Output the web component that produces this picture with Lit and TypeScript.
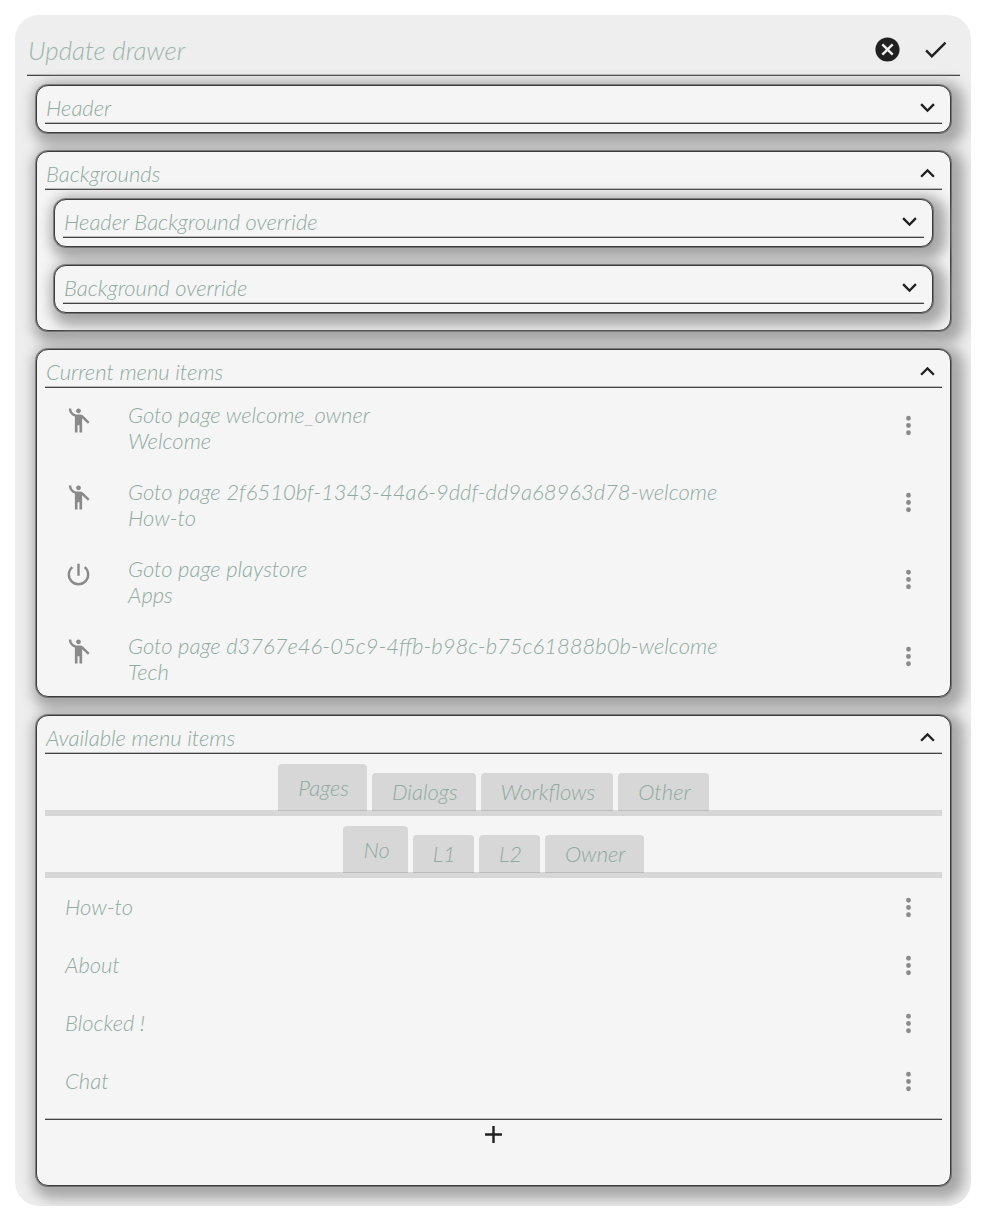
import { LitElement, html, css, svg } from "lit";
import { customElement, property, state } from "lit/decorators.js";

const ICONS: Record<string, string> = {
  down: "M7.41,8.58L12,13.17L16.59,8.58L18,10L12,16L6,10L7.41,8.58Z",
  up: "M7.41,15.41L12,10.83L16.59,15.41L18,14L12,8L6,14L7.41,15.41Z",
  check: "M21,7L9,19L3.5,13.5L4.91,12.09L9,16.17L19.59,5.59L21,7Z",
  close:
    "M12,2C17.53,2 22,6.47 22,12C22,17.53 17.53,22 12,22C6.47,22 2,17.53 2,12C2,6.47 6.47,2 12,2M15.59,7L12,10.59L8.41,7L7,8.41L10.59,12L7,15.59L8.41,17L12,13.41L15.59,17L17,15.59L13.41,12L17,8.41L15.59,7Z",
  dots: "M12,16A2,2 0 0,1 14,18A2,2 0 0,1 12,20A2,2 0 0,1 10,18A2,2 0 0,1 12,16M12,10A2,2 0 0,1 14,12A2,2 0 0,1 12,14A2,2 0 0,1 10,12A2,2 0 0,1 12,10M12,4A2,2 0 0,1 14,6A2,2 0 0,1 12,8A2,2 0 0,1 10,6A2,2 0 0,1 12,4Z",
  plus: "M19,13H13V19H11V13H5V11H11V5H13V11H19V13Z",
  power:
    "M13,3H11V13H13V3M17.83,5.17L16.41,6.59C17.99,7.86 19,9.81 19,12A7,7 0 0,1 12,19A7,7 0 0,1 5,12C5,9.81 6.01,7.86 7.58,6.58L6.17,5.17C4.23,6.82 3,9.26 3,12A9,9 0 0,0 12,21A9,9 0 0,0 21,12C21,9.26 19.77,6.82 17.83,5.17Z",
  person:
    "M12,2C13.1,2 14,2.9 14,4C14,5.1 13.1,6 12,6C10.9,6 10,5.1 10,4C10,2.9 10.9,2 12,2M15.9,8.1C15.5,7.7 14.8,7 13.5,7H11C8.2,7 6,4.8 6,2H4C4,5.2 6.1,7.8 9,8.7V22H11.2V16H12.8V22H15V10.1L19.8,14.6L21.2,13.2L15.9,8.1Z",
};

@customElement("ui-icon")
class UiIcon extends LitElement {
  @property() name = "";
  static styles = css`
    :host {
      display: inline-flex;
    }
    svg {
      width: 29px;
      height: 29px;
      fill: currentColor;
    }
  `;
  render() {
    return html`<svg viewBox="0 0 24 24" aria-hidden="true">${svg`<path d=${ICONS[this.name] ?? ""}></path>`}</svg>`;
  }
}

@customElement("fold-card")
class FoldCard extends LitElement {
  @property() heading = "";
  @property({ type: Boolean, reflect: true }) open = false;
  static styles = css`
    :host {
      display: block;
      box-sizing: border-box;
      margin: 0 9px;
      padding: 0 8px 8px;
      border: 1px solid #3c3c3c;
      border-radius: 12px;
      background: #f5f5f5;
      box-shadow: 0 0 0 1px rgba(60, 60, 60, 0.5), 5px 5px 13px 8px #a7a7a7;
    }
    .head {
      display: flex;
      align-items: center;
      justify-content: space-between;
      box-sizing: border-box;
      width: 100%;
      height: 38px;
      margin: 0;
      padding: 6px 0 0 1px;
      border: 0;
      border-bottom: 1px solid #444;
      box-shadow: inset 0 -1px 0 #bbb;
      background: none;
      color: inherit;
      font: inherit;
      text-align: left;
      cursor: pointer;
    }
    ui-icon {
      color: #212121;
    }
  `;
  render() {
    return html`
      <button class="head" aria-expanded=${this.open ? "true" : "false"} @click=${() => (this.open = !this.open)}>
        <span>${this.heading}</span>
        <ui-icon name=${this.open ? "up" : "down"}></ui-icon>
      </button>
      ${this.open ? html`<slot></slot>` : null}
    `;
  }
}

@customElement("tab-strip")
class TabStrip extends LitElement {
  @property({ attribute: false }) tabs: string[] = [];
  @state() private selected = 0;
  static styles = css`
    :host {
      display: flex;
      justify-content: center;
      align-items: flex-end;
      gap: 5px;
      height: 46px;
      padding-top: 10px;
      border-bottom: 6px solid rgba(0, 0, 0, 0.12);
    }
    .tab {
      height: 38px;
      margin-bottom: -1px;
      padding: 0 18px 0 20px;
      border: 0;
      border-radius: 4px 4px 0 0;
      background: rgba(0, 0, 0, 0.12);
      color: inherit;
      font: inherit;
      cursor: pointer;
    }
    .tab.on {
      height: 47px;
    }
  `;
  render() {
    return this.tabs.map(
      (t, i) => html`<button
        class="tab ${i === this.selected ? "on" : ""}"
        aria-pressed=${i === this.selected ? "true" : "false"}
        @click=${() => (this.selected = i)}
      >${t}</button>`
    );
  }
}

@customElement("app-root")
class AppRoot extends LitElement {
  private current = [
    { icon: "person", page: "Goto page welcome_owner", label: "Welcome" },
    { icon: "person", page: "Goto page 2f6510bf-1343-44a6-9ddf-dd9a68963d78-welcome", label: "How-to" },
    { icon: "power", page: "Goto page playstore", label: "Apps" },
    { icon: "person", page: "Goto page d3767e46-05c9-4ffb-b98c-b75c61888b0b-welcome", label: "Tech" },
  ];
  private available = ["How-to", "About", "Blocked !", "Chat"];

  static styles = css`
    :host {
      display: block;
      padding: 15px;
      background: #fff;
      color: #8faaa0;
      font: italic 300 22px/26px Lato, "Open Sans", sans-serif;
    }
    .panel {
      overflow: hidden;
      padding: 0 11px 20px 12px;
      border-radius: 24px;
      background: #eee;
    }
    .bar {
      display: flex;
      align-items: center;
      gap: 19px;
      height: 61px;
      margin-bottom: 9px;
      padding: 9px 10px 0 1px;
      box-sizing: border-box;
      border-bottom: 1px solid #444;
      box-shadow: inset 0 -1px 0 #bbb;
    }
    h1 {
      flex: 1;
      margin: 0;
      font-size: 26px;
      font-weight: 300;
      color: #9db5ac;
    }
    .icon-btn {
      display: inline-flex;
      padding: 0;
      border: 0;
      background: none;
      color: #212121;
      cursor: pointer;
    }
    .stack {
      display: grid;
      gap: 18px;
    }
    .nested {
      padding: 9px 0;
    }
    ul {
      margin: 0;
      padding: 0;
      list-style: none;
    }
    .menu {
      display: grid;
      gap: 25px;
      padding: 14px 19px 3px;
    }
    .item {
      display: grid;
      grid-template-columns: 64px 1fr 29px;
      color: #8a8a8a;
    }
    .item > ui-icon {
      padding-top: 4px;
    }
    .text {
      color: #8faaa0;
    }
    .more {
      align-self: center;
      color: #8a8a8a;
    }
    .item .more {
      padding-bottom: 6px;
    }
    .row {
      display: flex;
      align-items: center;
      justify-content: space-between;
      height: 58px;
      padding: 0 19px 0 20px;
    }
    .available {
      padding-bottom: 9px;
      border-bottom: 1px solid #444;
      box-shadow: inset 0 -1px 0 #bbb;
    }
    .add {
      display: flex;
      justify-content: center;
      align-items: flex-start;
      height: 57px;
    }
  `;

  render() {
    return html`
      <main class="panel">
        <header class="bar">
          <h1>Update drawer</h1>
          <button class="icon-btn" aria-label="Cancel"><ui-icon name="close"></ui-icon></button>
          <button class="icon-btn" aria-label="Confirm"><ui-icon name="check"></ui-icon></button>
        </header>
        <div class="stack">
          <fold-card heading="Header"></fold-card>
          <fold-card heading="Backgrounds" open>
            <div class="stack nested">
              <fold-card heading="Header Background override"></fold-card>
              <fold-card heading="Background override"></fold-card>
            </div>
          </fold-card>
          <fold-card heading="Current menu items" open>
            <ul class="menu">
              ${this.current.map(
                (m) => html`<li class="item">
                  <ui-icon name=${m.icon}></ui-icon>
                  <div class="text">
                    <div>${m.page}</div>
                    <div>${m.label}</div>
                  </div>
                  <button class="icon-btn more" aria-label="Options"><ui-icon name="dots"></ui-icon></button>
                </li>`
              )}
            </ul>
          </fold-card>
          <fold-card heading="Available menu items" open>
            <tab-strip .tabs=${["Pages", "Dialogs", "Workflows", "Other"]}></tab-strip>
            <tab-strip .tabs=${["No", "L1", "L2", "Owner"]}></tab-strip>
            <ul class="available">
              ${this.available.map(
                (a) => html`<li class="row">
                  <span>${a}</span>
                  <button class="icon-btn more" aria-label="Options"><ui-icon name="dots"></ui-icon></button>
                </li>`
              )}
            </ul>
            <div class="add">
              <button class="icon-btn" aria-label="Add"><ui-icon name="plus"></ui-icon></button>
            </div>
          </fold-card>
        </div>
      </main>
    `;
  }
}
